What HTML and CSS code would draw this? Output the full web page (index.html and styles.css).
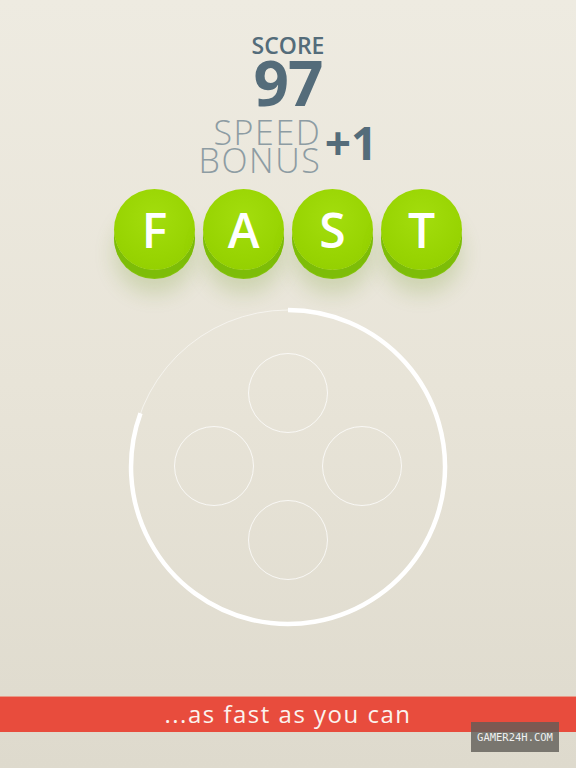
FILE: index.html
```html
<!DOCTYPE html>
<html>
<head>
<meta charset="utf-8">
<link rel="stylesheet" href="styles.css">
</head>
<body>
<div class="screen">
  <div class="score">
    <div class="score-label">SCORE</div>
    <div class="score-value">97</div>
    <div class="bonus">
      <div class="bonus-text"><span class="bonus-line">SPEED</span><span class="bonus-line">BONUS</span></div>
      <div class="bonus-value">+1</div>
    </div>
  </div>
  <div class="word">
    <div class="tile">F</div>
    <div class="tile">A</div>
    <div class="tile">S</div>
    <div class="tile">T</div>
  </div>
  <svg class="dial" viewBox="0 0 576 340" width="576" height="340">
    <circle cx="288" cy="167" r="157" fill="none" stroke="rgba(255,255,255,0.55)" stroke-width="1"/>
    <path d="M288 10 A157 157 0 1 1 140.5 113.3" fill="none" stroke="#ffffff" stroke-width="4.5"/>
    <circle cx="288" cy="93" r="39.5" fill="none" stroke="rgba(255,255,255,0.75)" stroke-width="1"/>
    <circle cx="214" cy="166" r="39.5" fill="none" stroke="rgba(255,255,255,0.75)" stroke-width="1"/>
    <circle cx="362" cy="166" r="39.5" fill="none" stroke="rgba(255,255,255,0.75)" stroke-width="1"/>
    <circle cx="288" cy="240" r="39.5" fill="none" stroke="rgba(255,255,255,0.75)" stroke-width="1"/>
  </svg>
  <div class="banner">...as fast as you can</div>
  <div class="watermark">GAMER24H.COM</div>
</div>
</body>
</html>
```

FILE: styles.css
```css
html, body {
  margin: 0;
  padding: 0;
}
body {
  width: 576px;
  height: 768px;
  overflow: hidden;
}
.screen {
  position: relative;
  width: 576px;
  height: 768px;
  background: linear-gradient(to bottom, #eeebe1 0%, #e8e4d8 50%, #dedacd 100%);
  display: flex;
  flex-direction: column;
  align-items: center;
  font-family: "Open Sans", "DejaVu Sans", sans-serif;
}
.score {
  margin-top: 33px;
  display: flex;
  flex-direction: column;
  align-items: center;
  color: #546c7a;
}
.score-label {
  font-size: 23px;
  font-weight: 600;
  line-height: 24px;
}
.score-value {
  font-size: 62px;
  font-weight: 700;
  line-height: 50px;
  margin-top: 0;
  letter-spacing: -1px;
}
.bonus {
  display: flex;
  align-items: center;
  margin-top: 11px;
}
.bonus-text {
  display: flex;
  flex-direction: column;
  align-items: flex-end;
  color: #8d9ca3;
}
.bonus-line {
  display: block;
  font-size: 34px;
  font-weight: 300;
  line-height: 28px;
  letter-spacing: 1.6px;
  margin-right: -1.6px;
}
.bonus-value {
  font-size: 46px;
  font-weight: 700;
  line-height: 44px;
  margin-left: 5px;
  margin-top: -8px;
  color: #546c7a;
}
.word {
  display: flex;
  gap: 8px;
  margin-top: 15px;
}
.tile {
  width: 81px;
  height: 81px;
  border-radius: 50%;
  background: radial-gradient(circle at 50% 35%, #a3dd0d 0%, #98d402 60%, #90cc00 100%);
  box-shadow: 0 8px 0 #7dbd08, 0 9px 0 #86c40e, 0 24px 20px rgba(110, 150, 30, 0.22);
  display: flex;
  align-items: center;
  justify-content: center;
  color: #ffffff;
  font-size: 48px;
  font-weight: 600;
  line-height: 1;
}
.dial {
  display: block;
  margin-top: 30px;
}
.banner {
  margin-top: 56px;
  width: 576px;
  height: 36px;
  background: #e84c3d;
  color: #fbf3ee;
  font-family: "Open Sans", Lato, sans-serif;
  font-size: 24px;
  font-weight: 500;
  line-height: 34px;
  text-align: center;
  letter-spacing: 1.5px;
  border-top: 1px solid #e89a88;
  box-sizing: border-box;
}
.watermark {
  position: absolute;
  left: 471px;
  top: 722px;
  width: 88px;
  height: 30px;
  background: rgba(95, 92, 88, 0.8);
  color: #f0f0f0;
  font-family: "DejaVu Sans Mono", monospace;
  font-size: 10.5px;
  line-height: 30px;
  text-align: center;
}
```
